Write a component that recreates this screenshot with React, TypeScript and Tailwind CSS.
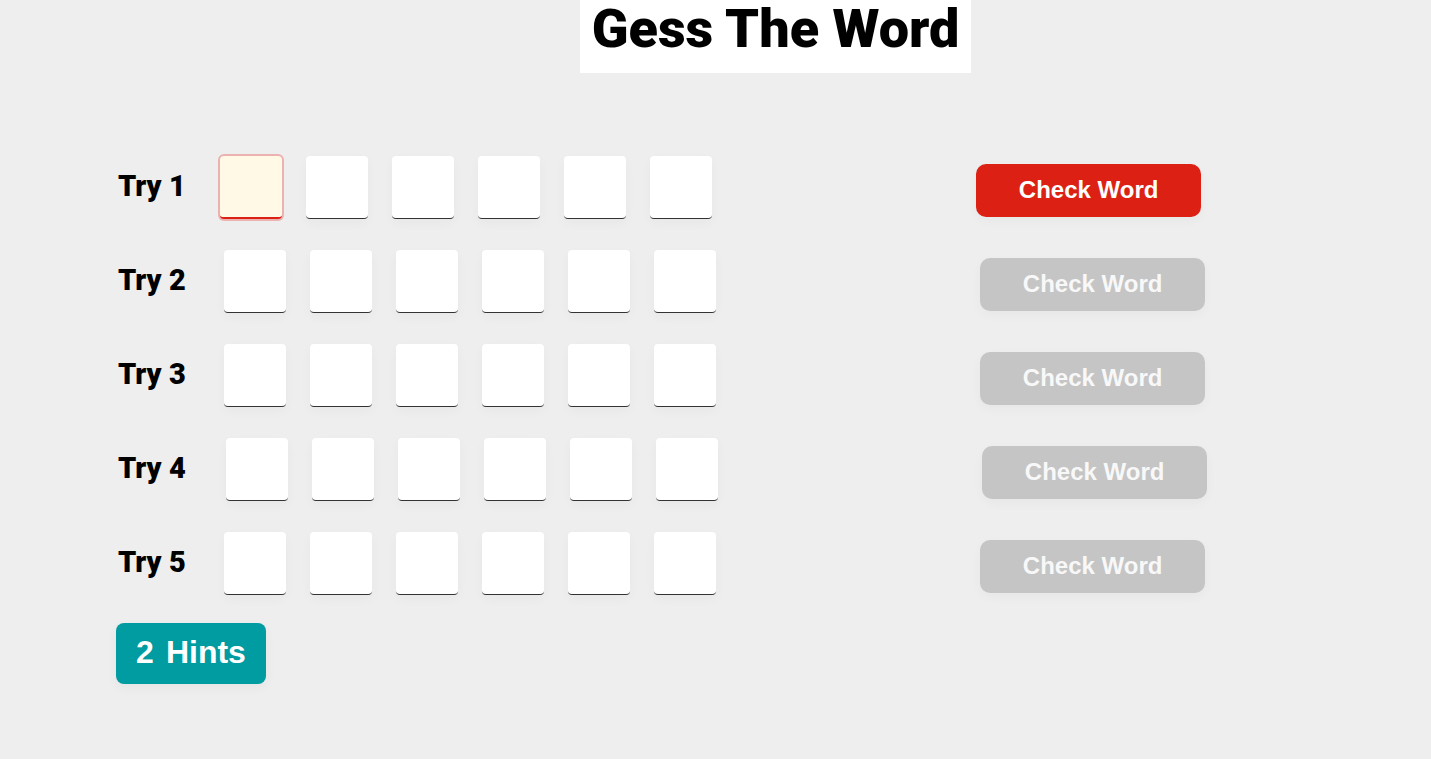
import { useState } from 'react'

const WORD_LENGTH = 6

const TRIES = [
  { id: 1, labelWidth: 'w-[104px]' },
  { id: 2, labelWidth: 'w-[108px]' },
  { id: 3, labelWidth: 'w-[108px]' },
  { id: 4, labelWidth: 'w-[110px]' },
  { id: 5, labelWidth: 'w-[108px]' },
]

interface TryRowProps {
  id: number
  labelWidth: string
  active: boolean
}

function TryRow({ id, labelWidth, active }: TryRowProps) {
  const [letters, setLetters] = useState<string[]>(Array(WORD_LENGTH).fill(''))

  function setLetter(index: number, value: string) {
    setLetters(prev => prev.map((l, i) => (i === index ? value.toUpperCase() : l)))
  }

  return (
    <div className="flex">
      <label
        htmlFor={`try-${id}-0`}
        className={`${labelWidth} shrink-0 pl-0.5 pt-3 font-[Roboto,sans-serif] text-[29px] leading-9 font-black text-black`}
      >
        Try {id}
      </label>

      <div className="flex w-[57.5%] shrink-0 gap-[24px]">
        {letters.map((letter, i) => (
          <input
            key={i}
            id={`try-${id}-${i}`}
            aria-label={`Try ${id}, letter ${i + 1}`}
            value={letter}
            maxLength={1}
            onChange={e => setLetter(i, e.target.value)}
            className={`
              h-[63px] w-[62px] rounded text-center text-3xl font-bold uppercase outline-none
              ${active && i === 0
                ? 'border-b-2 border-[#dc2114] bg-[#fff9e6] ring-2 ring-[#ebb2b0]'
                : 'border-b border-[#333] bg-white shadow-[0_4px_12px_rgba(0,0,0,0.03)]'
              }
            `}
          />
        ))}
      </div>

      <button
        disabled={!active}
        className={`
          mt-2 h-[53px] w-[225px] shrink-0 rounded-[10px] pb-0.5 text-2xl font-bold shadow-[0_4px_12px_rgba(0,0,0,0.03)]
          ${active ? 'bg-[#dc2114] text-white' : 'bg-[#c5c5c5] text-[#f8f8f8]'}
        `}
      >
        Check Word
      </button>
    </div>
  )
}

export default function App() {
  const [hints, setHints] = useState(2)

  return (
    <div className="min-h-screen bg-[#eee] font-['Liberation_Sans',Arial,sans-serif]">
      <header className="flex justify-center pl-[120px]">
        <h1 className="bg-white px-3 pb-[15px] font-[Roboto,sans-serif] text-[54px] leading-[58px] font-black text-black">
          Gess The Word
        </h1>
      </header>

      <main className="pt-[83px] pl-[116px]">
        <div className="flex flex-col gap-[31px]">
          {TRIES.map(t => (
            <TryRow key={t.id} id={t.id} labelWidth={t.labelWidth} active={t.id === 1} />
          ))}
        </div>

        <button
          onClick={() => setHints(h => Math.max(0, h - 1))}
          className="mt-7 flex h-[61px] w-[150px] items-center justify-center gap-3 rounded-lg bg-[#009ca1] pb-1 text-[32px] leading-9 font-bold text-white shadow-[0_4px_12px_rgba(0,0,0,0.04)]"
        >
          <span>{hints}</span>
          <span>Hints</span>
        </button>
      </main>
    </div>
  )
}
